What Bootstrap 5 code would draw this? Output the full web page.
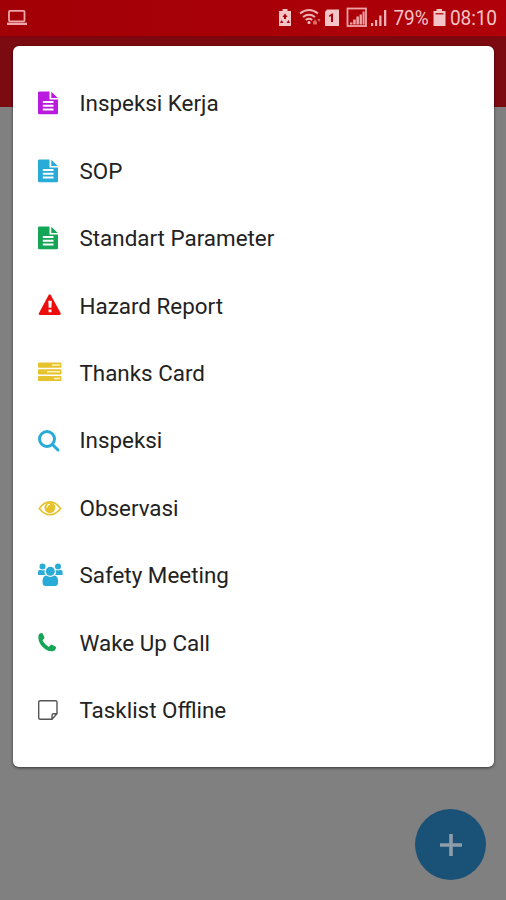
<!DOCTYPE html>
<html lang="id">
<head>
<meta charset="utf-8">
<meta name="viewport" content="width=device-width, initial-scale=1">
<title>Menu</title>
<link href="https://cdn.jsdelivr.net/npm/bootstrap@5.3.0/dist/css/bootstrap.min.css" rel="stylesheet">
<style>
body { font-family: Roboto, "Liberation Sans", sans-serif; background: #808080; height: 900px; overflow: hidden; }
.status-bar { height: 36px; background: linear-gradient(90deg, #a10006, #a80008 50%, #b00009); color: #f5c4c6; box-shadow: 0 1px 3px #850008; font-size: 20px; letter-spacing: -.1px; }
.status-bar svg { display: block; flex: none; }
.app-bar { height: 71px; background: #7b0a11; }
.menu-sheet { top: 46px; left: 13px; width: 481px; height: 721px; border-radius: 6px; padding: 23.5px 24px; box-shadow: 0 1px 3px rgba(0,0,0,.6); }
.menu-line { height: 67.5px; color: #222; font-size: 22.4px; }
.menu-line span { padding-top: 2px; }
.menu-line svg { width: 28px; height: 28px; margin-right: 14.5px; flex: none; }
.purple { color: #b91ade; } .sky { color: #29abd8; } .leaf { color: #14a556; }
.danger-red { color: #ee0d0d; } .gold { color: #e6c32c; } .ink { color: #555; }
.add-btn { width: 71px; height: 71px; left: 415px; top: 809px; background: #1a5177; }
</style>
<script src="https://cdn.jsdelivr.net/npm/bootstrap@5.3.0/dist/js/bootstrap.bundle.min.js"></script>
</head>
<body>
<svg class="d-none">
  <symbol id="doc" viewBox="0 0 28 28"><path fill="currentColor" fill-rule="evenodd" d="M2 2.500H12.500v8h8.500V24a1.200 1.200 0 0 1-1.200 1.200h-17.600A1.200 1.200 0 0 1 1 24V3.700A1.200 1.200 0 0 1 2 2.500ZM5.800 12V14h10.700v-2ZM5.800 15.800v2h10.700v-2ZM5.800 19.600v2h10.700v-2ZM14.300 2.700 20.800 9h-6.500Z"/></symbol>
</svg>

<header class="status-bar d-flex align-items-center position-relative">
  <svg width="506" height="36" viewBox="0 0 506 36" fill="#f5c4c6">
    <g fill="none" stroke="#f0a5a8" stroke-width="1.800"><rect x="9" y="10.800" width="15.500" height="10.500" rx="1"/><path d="M7 23.800h20" stroke-width="2.400"/></g>
    <path fill-rule="evenodd" d="M282.500 9h5v2h3.500v15h-12V11h3.500ZM285 13.500l-2.600 3.500h1.600v2h2v-2h1.600ZM281.500 20l2 3h-3.500ZM288.500 20l1.500 3h-3.500Z"/>
    <g fill="none" stroke="#f0b0b3" stroke-width="2"><path d="M300 13.500q9-7 18 0M303 17q6-4.500 12 0M305.800 20q3.200-2.300 6.400 0"/></g>
    <circle cx="309" cy="22.500" r="1.500"/>
    <path fill="#d66" d="m313 22 2-2.500 2 2.500v2.500h-4ZM317.500 19h3l-1.500 3Z"/>
    <path fill-rule="evenodd" d="M327 9.500h12v16.500h-14V12ZM332 13.500l-3 2v1.600l2-1V22h2v-8.500Z"/>
    <rect x="347.500" y="8.500" width="18.500" height="17.500" fill="none" stroke="#f0a5a8" stroke-width="1.800"/>
    <path fill="#f0a5a8" d="M350 24.500v-2h2.500v2ZM353.200 24.500v-5h2.500v5ZM356.400 24.500v-8h2.500v8ZM359.600 24.500v-10h2.300v10ZM362.600 24.500v-13h2v13Z"/>
    <g fill="#f0b0b3"><path d="M371 23h2.200v3H371ZM375 20h2.200v6H375ZM379.200 15.500h2.300V26h-2.300ZM384 10h2.300v16H384Z"/></g>
    <text x="393.500" y="25" font-size="20" textLength="35" lengthAdjust="spacingAndGlyphs">79%</text>
    <path d="M436.500 9h5.500v2h3.500v15h-12V11h3Z"/><path fill="#bd2027" d="M435.500 13h8v1.500h-8Z"/>
    <text x="450" y="25" font-size="20" textLength="47" lengthAdjust="spacingAndGlyphs">08:10</text>
  </svg>
</header>
<div class="app-bar"></div>

<main class="menu-sheet position-absolute bg-white d-flex flex-column">
  <div class="menu-line d-flex align-items-center"><svg class="purple"><use href="#doc"/></svg><span>Inspeksi Kerja</span></div>
  <div class="menu-line d-flex align-items-center"><svg class="sky"><use href="#doc"/></svg><span>SOP</span></div>
  <div class="menu-line d-flex align-items-center"><svg class="leaf"><use href="#doc"/></svg><span>Standart Parameter</span></div>
  <div class="menu-line d-flex align-items-center"><svg class="danger-red" viewBox="0 0 28 28"><path fill="currentColor" fill-rule="evenodd" d="M11.500 4.200q1.200-1.800 2.400 0l9.800 18q.7 1.800-1.200 1.800h-19.500q-2-.1-1.100-1.800ZM11.300 9.800l.4 7h2.700l.4-7ZM11.600 18.500v2.700h2.900v-2.700Z"/></svg><span>Hazard Report</span></div>
  <div class="menu-line d-flex align-items-center"><svg viewBox="0 0 28 28" class="gold"><g fill="currentColor"><rect x="1" y="3.500" width="23.500" height="5.200" rx="1.200"/><rect x="1" y="10.200" width="23.500" height="5.200" rx="1.200"/><rect x="1" y="16.900" width="23.500" height="5.200" rx="1.200"/></g><path stroke="#fff3b8" stroke-width="1.500" d="M15 6.100h8M10 12.800h13M17 19.500h6"/></svg><span>Thanks Card</span></div>
  <div class="menu-line d-flex align-items-center"><svg class="sky" viewBox="0 0 28 28" fill="none" stroke="currentColor" stroke-width="3"><circle cx="10" cy="13" r="7.500"/><path d="m15.500 18.500 5.500 5.500" stroke-linecap="round"/></svg><span>Inspeksi</span></div>
  <div class="menu-line d-flex align-items-center"><svg class="gold" viewBox="0 0 28 28"><path d="M2.300 14.500Q7 7.800 12.900 7.800t10.600 6.700q-4.700 6.200-10.600 6.200T2.300 14.500Z" fill="none" stroke="currentColor" stroke-width="1.700"/><circle cx="12.900" cy="13.600" r="5.400" fill="currentColor"/><path d="M10 13.500q0-3 3-3.200" fill="none" stroke="#fff" stroke-width="1.100"/></svg><span>Observasi</span></div>
  <div class="menu-line d-flex align-items-center"><svg class="sky" viewBox="0 0 28 28" fill="currentColor"><circle cx="5.500" cy="5.500" r="3"/><circle cx="21" cy="5.500" r="3"/><path d="M1 13.500V11q0-2 2-2.200l2.500.7 2.300-.5q-1 3 .7 5H3q-2 0-2-.5ZM25.600 13.500V11q0-2-2-2.200l-2.500.7-2.300-.5q1 3-.7 5h5.500q2 0 2-.5Z"/><circle cx="13.300" cy="10.300" r="4.500"/><path d="M5.500 21q-.2-6.300 4-6.400 3.800 2.600 7.600 0 4.200.1 4 6.400 0 4-3 4H8.500q-3 0-3-4Z"/></svg><span>Safety Meeting</span></div>
  <div class="menu-line d-flex align-items-center"><svg class="leaf" viewBox="0 0 28 28"><path fill="currentColor" d="M1.500 7.300Q2.500 5.100 4.700 5q.7 0 1 .8l1.700 3.400q.3.700-.3 1.300l-1.700 1.700q2.300 4.500 6.400 6.700l1.800-2q.6-.6 1.300-.2l3.500 1.900q.7.400.6 1.100-.5 3.300-4 3.500-5.500.2-10-5Q.500 13.200 1.500 7.300Z"/></svg><span>Wake Up Call</span></div>
  <div class="menu-line d-flex align-items-center"><svg class="ink" viewBox="0 0 28 28" fill="none" stroke="currentColor" stroke-width="1.400"><path d="M3.200 4.700H18.500q1.500 0 1.500 1.500v11.500L15 23.200H3.200q-1.500 0-1.500-1.500V6.200q0-1.500 1.500-1.500ZM15 23.200v-3.800q0-1.700 1.700-1.700H20"/></svg><span>Tasklist Offline</span></div>
</main>

<button class="add-btn position-absolute border-0 rounded-circle p-0 d-flex align-items-center justify-content-center" aria-label="Tambah">
  <svg width="22" height="22"><path d="M11 0v22M0 11h22" stroke="#8f9da8" stroke-width="3.600"/></svg>
</button>
</body>
</html>
